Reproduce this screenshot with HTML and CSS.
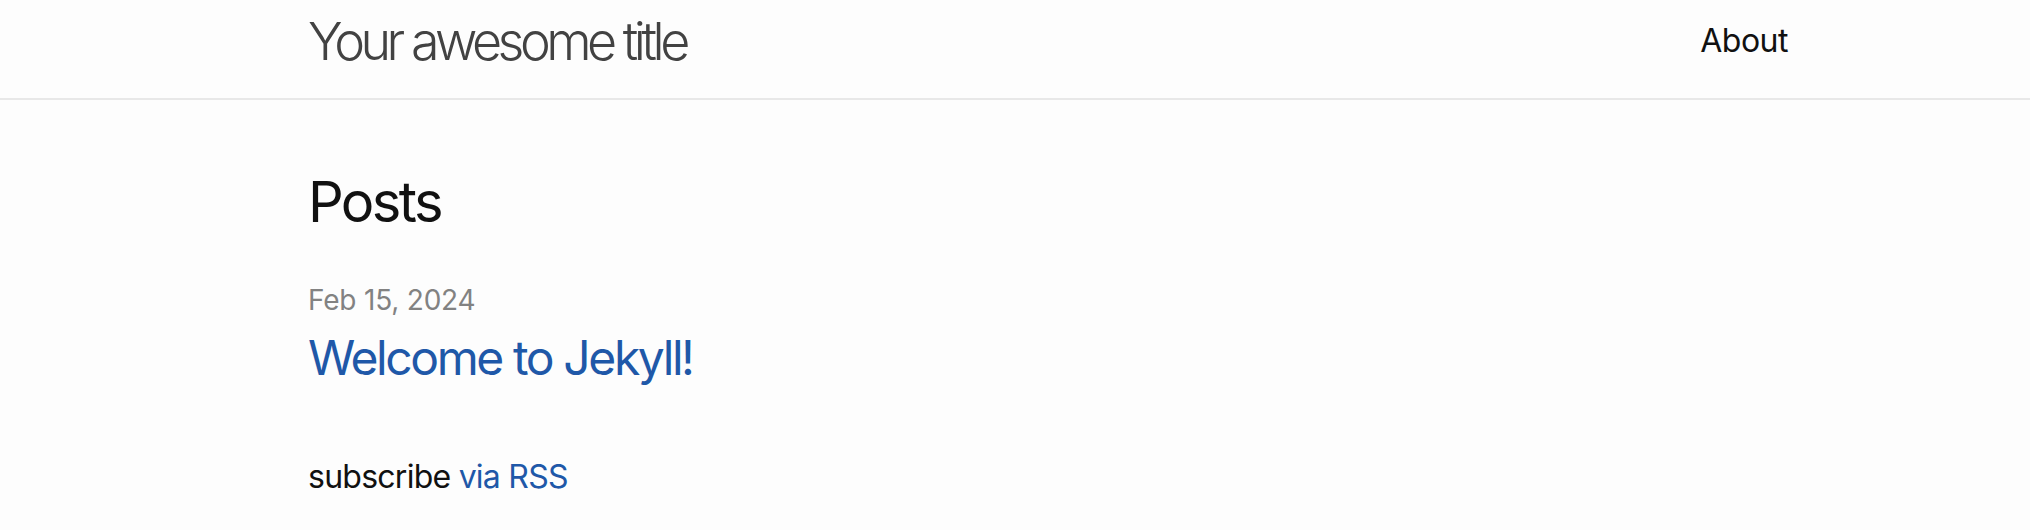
FILE: index.html
```html
<!DOCTYPE html>
<html lang="en">
<head>
<meta charset="utf-8">
<title>Your awesome title</title>
<link rel="stylesheet" href="styles.css">
</head>
<body>
<header class="site-header">
  <div class="wrapper header-row">
    <a class="site-title" href="#">Your awesome title</a>
    <nav class="site-nav">
      <a class="page-link" href="#">About</a>
    </nav>
  </div>
</header>
<main class="page-content">
  <div class="wrapper">
    <h2 class="post-list-heading">Posts</h2>
    <ul class="post-list">
      <li>
        <span class="post-meta">Feb 15, 2024</span>
        <h3 class="post-title"><a class="post-link" href="#">Welcome to Jekyll!</a></h3>
      </li>
    </ul>
    <p class="rss-subscribe">subscribe <a href="#">via RSS</a></p>
  </div>
</main>
</body>
</html>
```
FILE: styles.css
```css
html, body {
  margin: 0;
  padding: 0;
}
body {
  background: #fdfdfd;
  color: #111111;
  font-family: Inter, "Noto Sans", "Liberation Sans", sans-serif;
  font-size: 32px;
  line-height: 48px;
  overflow: hidden;
  height: 530px;
}
a {
  text-decoration: none;
}
.wrapper {
  width: 1480px;
  margin-left: 308px;
}
.site-header {
  height: 98px;
  border-bottom: 2px solid #e8e8e8;
}
.header-row {
  display: flex;
  justify-content: space-between;
  align-items: flex-start;
}
.site-title {
  font-size: 52px;
  font-weight: 300;
  letter-spacing: -4.5px;
  line-height: 84px;
  color: #424242;
}
.site-nav {
  line-height: 81px;
}
.page-link {
  color: #111111;
  font-size: 32px;
  letter-spacing: -0.5px;
}
.page-content {
  padding-top: 60px;
}
.post-list-heading {
  margin: 0;
  font-size: 56px;
  font-weight: 400;
  letter-spacing: -2.6px;
  line-height: 84px;
}
.post-list {
  list-style: none;
  margin: 0;
  padding: 0;
}
.post-meta {
  display: block;
  font-size: 28px;
  line-height: 42px;
  letter-spacing: -0.2px;
  color: #828282;
  margin-top: 35px;
}
.post-title {
  margin: 7px 0 0;
  font-size: 48px;
  font-weight: 400;
  letter-spacing: -2.4px;
  line-height: 60px;
}
.post-link, .rss-subscribe a {
  color: #1f58a8;
}
.rss-subscribe {
  margin: 65px 0 0;
  letter-spacing: -0.75px;
}
```
